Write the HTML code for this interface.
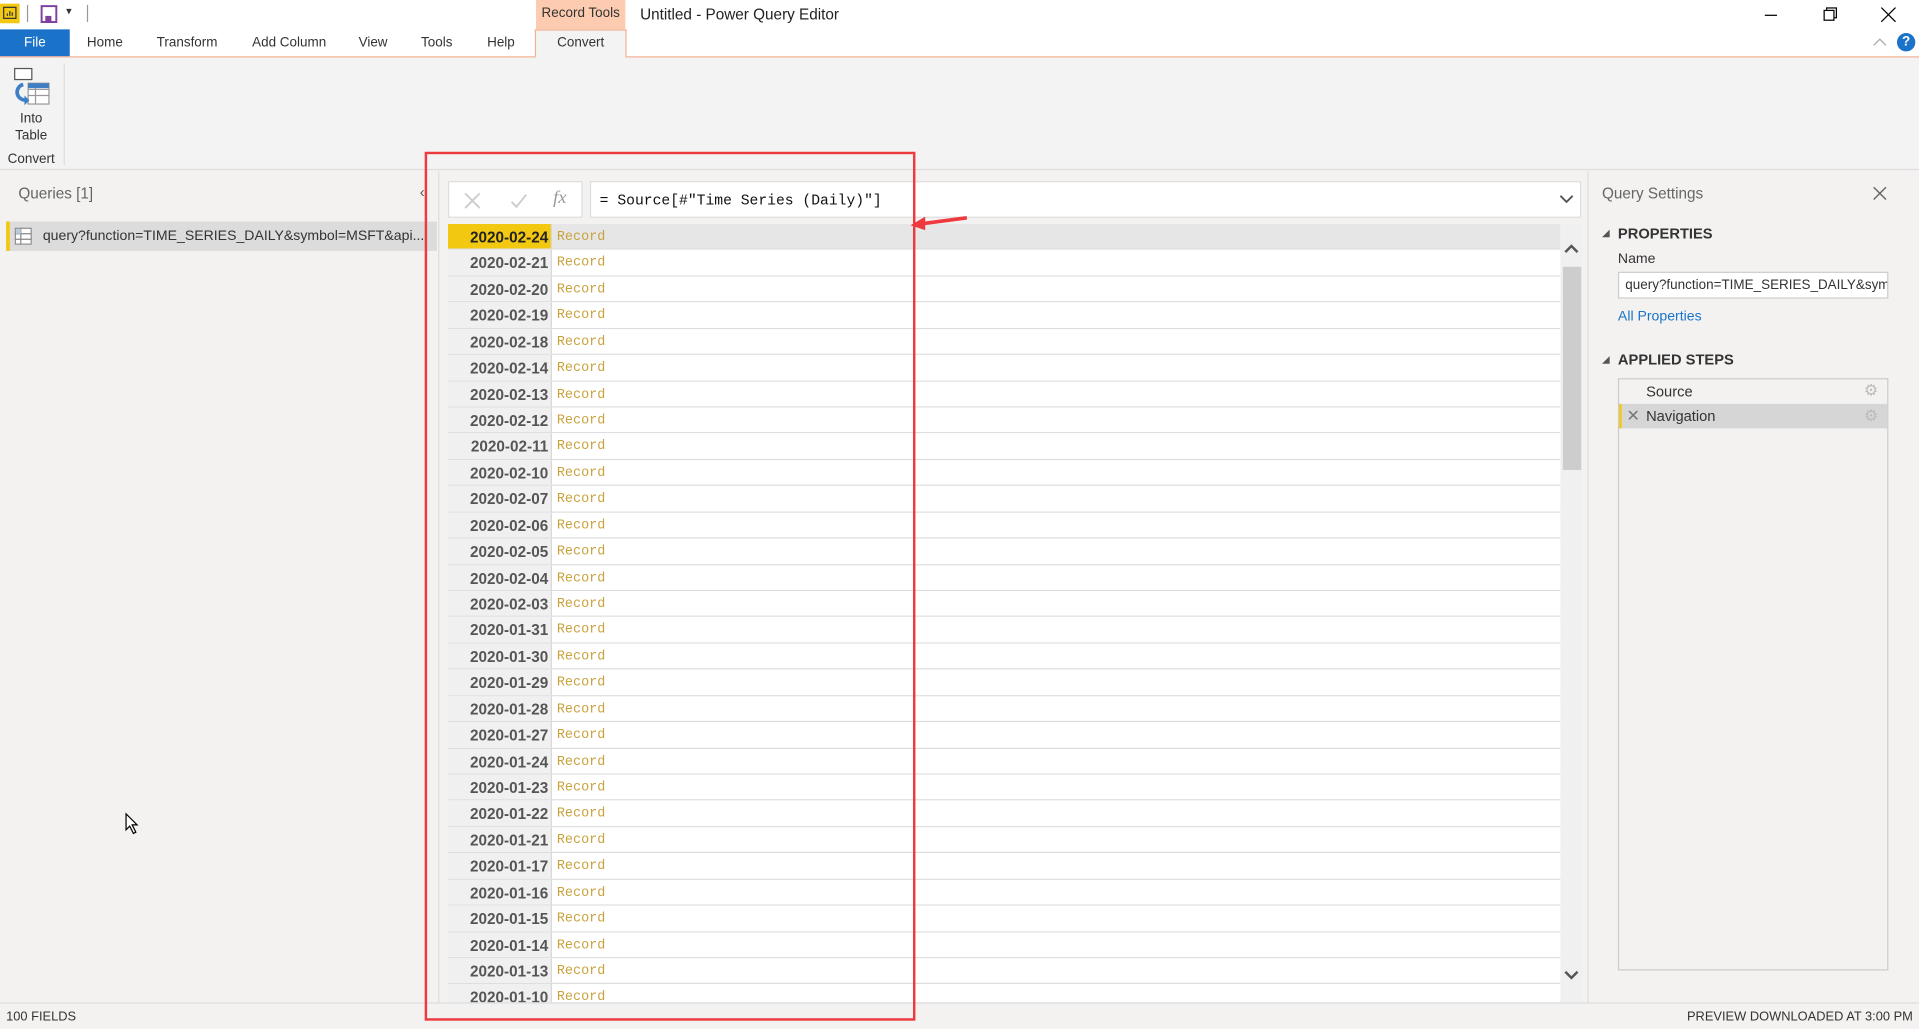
<!DOCTYPE html>
<html><head><meta charset="utf-8"><style>
*{margin:0;padding:0;box-sizing:border-box}
html,body{width:1919px;height:1029px;overflow:hidden;background:#f3f2f1}
#root{position:absolute;left:0;top:0;width:1568px;height:841px;transform:scale(1.22385);transform-origin:0 0;font-family:"Liberation Sans",sans-serif;font-size:11.5px;color:#333;background:#f3f2f1}
.a{position:absolute}
.tab{position:absolute;top:29px;font-size:11px;color:#333}
.row{position:absolute;left:366px;width:909px;height:21.43px;border-bottom:1px solid #ddd;background:#fff}
.rn{position:absolute;left:0;top:0;width:85px;height:100%;background:#f0f0f0;border-right:1px solid #d8d8d8;text-align:right;padding-right:2px;font-weight:bold;font-size:12.5px;color:#555;line-height:22px}
.rv{position:absolute;left:89px;top:1px;line-height:21px;font-family:"Liberation Mono",monospace;font-size:11px;color:#c9a23c}
</style></head><body><div id="root">
<div class="a" style="left:0;top:0;width:1568px;height:46px;background:#fff"></div>
<div class="a" style="left:0;top:3px;width:16px;height:16px;background:#f2c811"></div>
<svg class="a" style="left:2px;top:5px" width="12" height="12"><rect x="1" y="1" width="10" height="9" fill="none" stroke="#333"/><path d="M4 8V6M6 8V4M8 8V5" stroke="#333"/></svg>
<div class="a" style="left:22px;top:4px;width:1px;height:14px;background:#999"></div>
<svg class="a" style="left:33px;top:4px" width="14" height="15"><rect x="1" y="1" width="12" height="13" fill="none" stroke="#8040a0" stroke-width="1.6"/><rect x="4" y="9" width="5" height="5" fill="#8040a0"/></svg>
<div class="a" style="left:54px;top:4px;font-size:9px">▾</div>
<div class="a" style="left:71px;top:4px;width:1px;height:14px;background:#999"></div>
<div class="a" style="left:438px;top:0;width:73px;height:24px;background:#fccbb0;font-size:11px;text-align:center;line-height:22px">Record Tools</div>
<div class="a" style="left:523px;top:5px;font-size:12.5px;color:#222">Untitled - Power Query Editor</div>
<div class="a" style="left:1442px;top:12px;width:10px;height:1px;background:#000"></div>
<div class="a" style="left:1490px;top:8px;width:9px;height:9px;border:1px solid #000;background:#fff;box-shadow:2px -2px 0 -1px #fff,2px -2px 0 0 #000"></div>
<svg class="a" style="left:1537px;top:6px" width="12" height="12"><path d="M0 0L12 12M12 0L0 12" stroke="#000"/></svg>
<div class="a" style="left:0;top:24px;width:57px;height:22px;background:#1a73c8;color:#fff;font-size:11px;text-align:center;line-height:22px">File</div>
<div class="tab" style="left:71px">Home</div>
<div class="tab" style="left:128px">Transform</div>
<div class="tab" style="left:206px">Add Column</div>
<div class="tab" style="left:293px">View</div>
<div class="tab" style="left:344px">Tools</div>
<div class="tab" style="left:398px">Help</div>
<div class="a" style="left:437px;top:24px;width:75px;height:23px;background:#f3f3f4;border:1px solid #f4b193;border-bottom:none;font-size:11px;text-align:center;line-height:21px">Convert</div>
<div class="a" style="left:0;top:46px;width:437px;height:1px;background:#f4b193"></div>
<div class="a" style="left:512px;top:46px;width:1056px;height:1px;background:#f4b193"></div>
<svg class="a" style="left:1530px;top:30px" width="12" height="8"><path d="M1 7L6 2L11 7" stroke="#aaa" fill="none"/></svg>
<div class="a" style="left:1550px;top:27px;width:15px;height:15px;border-radius:50%;background:#1a73c8;color:#fff;font-weight:bold;font-size:11px;text-align:center;line-height:15px">?</div>
<div class="a" style="left:0;top:47px;width:1568px;height:92px;background:#f3f3f4;border-bottom:1px solid #ddd"></div>
<svg class="a" style="left:9px;top:55px" width="34" height="32"><rect x="3" y="1" width="14" height="9" fill="#fff" stroke="#555"/><rect x="14" y="13" width="17" height="17" fill="#fff" stroke="#999"/><path d="M14 18H31M14 23H31M20 13V30" stroke="#999"/><rect x="14" y="13" width="17" height="4" fill="#3f7fc6"/><path d="M10 14C3 16 3 26 12 27" stroke="#3f7fc6" stroke-width="3" fill="none"/><path d="M11 23L15 27L11 31Z" fill="#3f7fc6"/></svg>
<div class="a" style="left:0;top:90px;width:51px;text-align:center;font-size:11px;line-height:14px">Into<br>Table</div>
<div class="a" style="left:0;top:124px;width:51px;text-align:center;font-size:11px">Convert</div>
<div class="a" style="left:52px;top:52px;width:1px;height:83px;background:#ddd"></div>
<div class="a" style="left:15px;top:151px;font-size:12.5px;color:#666">Queries [1]</div>
<div class="a" style="left:343px;top:150px;font-size:12px;color:#555">‹</div>
<div class="a" style="left:5px;top:181px;width:352px;height:24px;background:#dcdcdc;border-left:3px solid #f2c811"></div>
<svg class="a" style="left:12px;top:186px" width="14" height="14"><rect x="0.5" y="0.5" width="13" height="13" fill="#fff" stroke="#888"/><path d="M0 5H14M0 9.5H14M5 0V14" stroke="#888"/><rect x="1" y="1" width="4" height="4" fill="#bcd"/></svg>
<div class="a" style="left:35px;top:187px;font-size:11.5px;color:#333;white-space:nowrap">query?function=TIME_SERIES_DAILY&amp;symbol=MSFT&amp;api...</div>
<svg class="a" style="left:102px;top:664px" width="12" height="18"><path d="M1 1V14L4 11L7 17L9 16L6 10H10Z" fill="#fff" stroke="#000"/></svg>
<div class="a" style="left:358px;top:140px;width:1px;height:680px;background:#ddd"></div>
<div class="a" style="left:1297px;top:140px;width:1px;height:680px;background:#ddd"></div>
<div class="a" style="left:366px;top:148px;width:110px;height:30px;background:#fff;border:1px solid #ddd"></div>
<svg class="a" style="left:378px;top:156px" width="16" height="16"><path d="M2 2L14 14M14 2L2 14" stroke="#ccc" stroke-width="1.5"/></svg>
<svg class="a" style="left:416px;top:156px" width="16" height="16"><path d="M2 9L6 13L14 3" stroke="#ccc" stroke-width="1.5" fill="none"/></svg>
<div class="a" style="left:452px;top:154px;font-family:'Liberation Serif',serif;font-style:italic;font-size:15px;color:#999">fx</div>
<div class="a" style="left:482px;top:148px;width:810px;height:30px;background:#fff;border:1px solid #ddd"></div>
<div class="a" style="left:490px;top:157px;font-family:'Liberation Mono',monospace;font-size:12px;color:#111">= Source[#"Time Series (Daily)"]</div>
<svg class="a" style="left:1274px;top:159px" width="12" height="8"><path d="M1 1L6 6L11 1" stroke="#555" stroke-width="1.5" fill="none"/></svg>
<div class="a" style="left:366px;top:183px;width:927px;height:636px;overflow:hidden;background:#fff">
<div id="g"></div>
</div>
<div class="a" style="left:1275px;top:183px;width:18px;height:636px;background:#f0f0f0"></div>
<div class="a" style="left:1277px;top:218px;width:15px;height:166px;background:#cdcdcd"></div>
<svg class="a" style="left:1278px;top:199px" width="12" height="8"><path d="M1 7L6 2L11 7" stroke="#555" stroke-width="2" fill="none"/></svg>
<svg class="a" style="left:1278px;top:793px" width="12" height="8"><path d="M1 1L6 6L11 1" stroke="#555" stroke-width="2" fill="none"/></svg>
<div class="a" style="left:1309px;top:151px;font-size:12.5px;color:#666">Query Settings</div>
<svg class="a" style="left:1530px;top:152px" width="12" height="12"><path d="M1 1L11 11M11 1L1 11" stroke="#666" stroke-width="1.2"/></svg>
<div class="a" style="left:1309px;top:186px;font-size:8px;color:#555">◢</div>
<div class="a" style="left:1322px;top:184px;font-size:12px;font-weight:bold;color:#333">PROPERTIES</div>
<div class="a" style="left:1322px;top:206px;font-size:11.5px">Name</div>
<div class="a" style="left:1322px;top:222px;width:221px;height:22px;background:#fff;border:1px solid #ccc;font-size:11px;line-height:20px;padding-left:5px;overflow:hidden;white-space:nowrap">query?function=TIME_SERIES_DAILY&amp;sym</div>
<div class="a" style="left:1322px;top:253px;font-size:11.5px;color:#1a73c8">All Properties</div>
<div class="a" style="left:1309px;top:289px;font-size:8px;color:#555">◢</div>
<div class="a" style="left:1322px;top:287px;font-size:12px;font-weight:bold;color:#333">APPLIED STEPS</div>
<div class="a" style="left:1322px;top:309px;width:221px;height:484px;background:#f3f2f1;border:1px solid #ccc"></div>
<div class="a" style="left:1345px;top:313px;font-size:12px">Source</div>
<div class="a" style="left:1523px;top:311px;font-size:13px;color:#bbb">⚙</div>
<div class="a" style="left:1323px;top:330px;width:219px;height:20px;background:#d6d6d6;border-left:2px solid #f2c811"></div>
<div class="a" style="left:1329px;top:332px;font-size:13px;color:#777">✕</div>
<div class="a" style="left:1345px;top:333px;font-size:12px">Navigation</div>
<div class="a" style="left:1523px;top:332px;font-size:13px;color:#bbb">⚙</div>
<div class="a" style="left:0;top:819px;width:1568px;height:22px;background:#f3f2f1;border-top:1px solid #ddd"></div>
<div class="a" style="left:5px;top:825px;font-size:10.5px">100 FIELDS</div>
<div class="a" style="right:5px;top:825px;font-size:10.5px">PREVIEW DOWNLOADED AT 3:00 PM</div>
<div class="a" style="left:347px;top:124px;width:401px;height:710px;border:2.5px solid #ee3a3f"></div>
<svg class="a" style="left:740px;top:172px" width="56" height="18"><path d="M50 6L12 11" stroke="#ee3a3f" stroke-width="3"/><path d="M4 12L16 5L16 16Z" fill="#ee3a3f"/></svg>
</div>
<script>
var d=["2020-02-24","2020-02-21","2020-02-20","2020-02-19","2020-02-18","2020-02-14","2020-02-13","2020-02-12","2020-02-11","2020-02-10","2020-02-07","2020-02-06","2020-02-05","2020-02-04","2020-02-03","2020-01-31","2020-01-30","2020-01-29","2020-01-28","2020-01-27","2020-01-24","2020-01-23","2020-01-22","2020-01-21","2020-01-17","2020-01-16","2020-01-15","2020-01-14","2020-01-13","2020-01-10"];
var h="";d.forEach(function(x,i){var f=i==0;h+='<div class="row" style="left:0;top:'+(i*21.43)+'px;'+(f?'background:#e6e6e6':'')+'"><div class="rn" style="'+(f?'background:#f2c811;color:#222':'')+'">'+x+'</div><div class="rv">Record</div></div>';});
document.getElementById("g").innerHTML=h;
</script>
</body></html>
